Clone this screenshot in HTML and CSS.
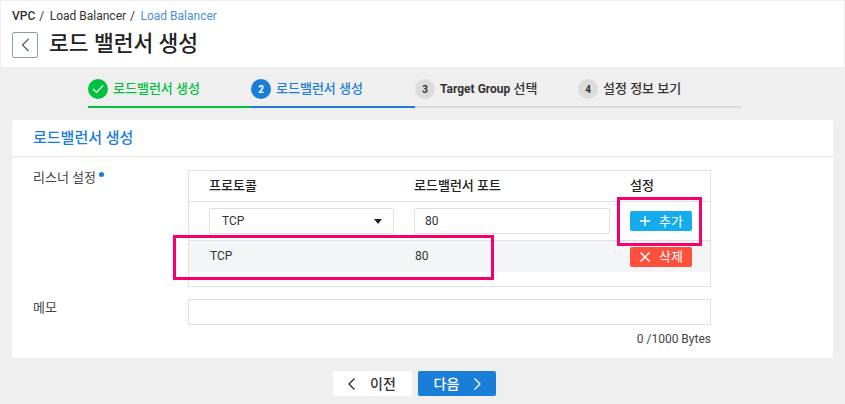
FILE: index.html
```html
<!DOCTYPE html>
<html lang="ko">
<head>
    <meta charset="UTF-8">
    <title>로드 밸런서 생성</title>
    <link rel="stylesheet" href="styles.css">
</head>
<body>
    <header class="page-head">
        <div class="crumbs">
            <strong>VPC</strong><span class="sep">/</span><span>Load Balancer</span><span class="sep">/</span><span class="crumb-now">Load Balancer</span>
        </div>
        <div class="title-row">
            <button class="back-btn" type="button">
                <svg width="9" height="14" viewBox="0 0 9 14"><path d="M7.5 1 1.5 7l6 6" fill="none" stroke="#4a5a70" stroke-width="1.2"/></svg>
            </button>
            <h1>로드 밸런서 생성</h1>
        </div>
    </header>

    <ol class="steps">
        <li class="step step-done">
            <span class="step-num">
                <svg width="12" height="10" viewBox="0 0 12 10"><path d="M1 5l3.5 3.5L11 1.5" fill="none" stroke="#fff" stroke-width="1.2"/></svg>
            </span>
            로드밸런서 생성
        </li>
        <li class="step step-now"><span class="step-num">2</span>로드밸런서 생성</li>
        <li class="step step-next"><span class="step-num">3</span><span><b>Target Group</b> 선택</span></li>
        <li class="step step-last"><span class="step-num">4</span>설정 정보 보기</li>
    </ol>

    <section class="card">
        <h2 class="card-title">로드밸런서 생성</h2>
        <div class="card-body">
            <div class="field field-listener">
                <label class="field-label">리스너 설정<i class="req"></i></label>
                <div class="listener">
                    <div class="row row-head">
                        <span class="col-proto">프로토콜</span>
                        <span class="col-port">로드밸런서 포트</span>
                        <span class="col-set">설정</span>
                    </div>
                    <div class="row row-input">
                        <div class="col-proto box select">TCP<i class="caret"></i></div>
                        <div class="col-port box box-port">80</div>
                        <div class="col-set">
                            <button class="btn-sm btn-add" type="button">
                                <svg width="12" height="12" viewBox="0 0 12 12"><path d="M6 1v10M1 6h10" stroke="#fff" stroke-width="1.5"/></svg>
                                <span class="btn-txt">추가</span>
                            </button>
                        </div>
                    </div>
                    <div class="row row-item">
                        <span class="col-proto item-txt">TCP</span>
                        <span class="col-port item-txt">80</span>
                        <div class="col-set">
                            <button class="btn-sm btn-del" type="button">
                                <svg width="12" height="12" viewBox="0 0 12 12"><path d="M1.5 1.5l9 9M10.5 1.5l-9 9" stroke="#fff" stroke-width="1.5"/></svg>
                                <span class="btn-txt">삭제</span>
                            </button>
                        </div>
                    </div>
                </div>
            </div>
            <div class="field field-memo">
                <label class="field-label">메모</label>
                <div class="memo-wrap">
                    <div class="memo"></div>
                    <div class="memo-count">0 /1000 Bytes</div>
                </div>
            </div>
        </div>
    </section>

    <div class="actions">
        <button class="btn-prev" type="button">
            <svg width="9" height="14" viewBox="0 0 9 14"><path d="M7.5 1.5 2 7l5.5 5.5" fill="none" stroke="#333" stroke-width="1.4"/></svg>
            <span class="btn-txt">이전</span>
        </button>
        <button class="btn-next" type="button">
            <span class="btn-txt">다음</span>
            <svg width="9" height="14" viewBox="0 0 9 14"><path d="M1.5 1.5 7 7l-5.5 5.5" fill="none" stroke="#fff" stroke-width="1.4"/></svg>
        </button>
    </div>

    <div class="mark mark-row"></div>
    <div class="mark mark-add"></div>
</body>
</html>
```

FILE: styles.css
```css
* {
    box-sizing: border-box;
}
html, body {
    height: 100%;
}
body {
    margin: 0;
    position: relative;
    overflow: hidden;
    background-color: #efefef;
    color: #333;
    font-family: Roboto, "Noto Sans CJK KR", sans-serif;
    font-size: 12px;
}
button {
    font-family: inherit;
    border: 0;
    padding: 0;
}

.page-head {
    height: 66px;
    margin: 1px 1px 0;
    padding: 7px 11px 0;
    background: white;
}
.crumbs {
    display: flex;
    height: 16px;
    line-height: 16px;
    color: #333;
}
.crumbs strong {
    font-weight: 500;
}
.crumbs .sep {
    margin: 0 5.5px 0 4px;
}
.crumb-now {
    color: #4a90d9;
}
.title-row {
    display: flex;
    align-items: center;
    gap: 11px;
    margin-top: 8px;
}
.back-btn {
    display: flex;
    align-items: center;
    justify-content: center;
    width: 26px;
    height: 26px;
    background: white;
    border: 1px solid #8a9bb3;
    border-radius: 2px;
}
h1 {
    margin: 0 0 2px;
    color: #222;
    font-size: 21.5px;
    font-weight: 500;
    line-height: 24px;
}

.steps {
    display: flex;
    height: 41px;
    margin: 12px 0 0 88px;
    padding: 0;
    list-style: none;
}
.step {
    display: flex;
    align-items: flex-start;
    gap: 5px;
    width: 163px;
    height: 29px;
    border-bottom: 2px solid #d9d9d9;
    color: #333;
    font-size: 13px;
    font-weight: 500;
    line-height: 19px;
}
.step-num {
    display: flex;
    align-items: center;
    justify-content: center;
    width: 20px;
    height: 20px;
    border-radius: 50%;
    background: #dcdcdc;
    font-size: 10px;
    font-weight: 700;
}
.step-done {
    border-color: #00c13f;
    color: #00c13f;
}
.step-done .step-num {
    background: #00c13f;
}
.step-now {
    width: 164px;
    border-color: #1a7dd7;
    color: #1a7dd7;
}
.step-now .step-num {
    background: #1a7dd7;
    color: white;
}
.step b {
    font-size: 12px;
    font-weight: 700;
}

.card {
    margin: 0 12px;
    height: 238px;
    background: white;
    border-radius: 3px;
}
.card-title {
    height: 37px;
    margin: 0;
    padding-left: 21px;
    border-bottom: 1px solid #e6e6e6;
    color: #1a7dd7;
    font-size: 15px;
    font-weight: 500;
    line-height: 36px;
}
.card-body {
    padding: 13px 122px 0 21px;
}
.field {
    display: flex;
}
.field-label {
    flex: none;
    width: 155px;
    font-size: 13px;
    line-height: 16px;
    color: #444;
}
.req {
    display: inline-block;
    vertical-align: 5px;
    width: 5px;
    height: 5px;
    margin-left: 3px;
    border-radius: 50%;
    background: #1a7dd7;
}

.listener {
    flex: 1;
    min-width: 0;
    height: 117px;
    border: 1px solid #e0e0e0;
}
.row {
    display: flex;
    align-items: center;
    padding-left: 20px;
}
.col-proto {
    flex: none;
    width: 185px;
    margin-right: 20px;
}
.col-port {
    flex: none;
    width: 196px;
    margin-right: 20px;
}
.row-head {
    height: 31px;
    padding-bottom: 4px;
    border-bottom: 1px solid #e0e0e0;
    color: #222;
    font-size: 13px;
    font-weight: 500;
}
.row-input {
    height: 39px;
    border-bottom: 1px solid #e0e0e0;
}
.box {
    height: 26px;
    padding-left: 12px;
    border: 1px solid #e0e0e0;
    border-radius: 2px;
    line-height: 24px;
}
.box-port {
    padding-left: 10px;
}
.select {
    position: relative;
}
.caret {
    position: absolute;
    top: 10px;
    right: 11px;
    border-style: solid;
    border-width: 5px 4.5px 0;
    border-color: #222 transparent transparent;
}
.row-item {
    height: 31px;
    background: #f4f5f7;
}
.item-txt {
    padding: 0 0 2px 1px;
}
.btn-sm {
    display: flex;
    align-items: center;
    gap: 8px;
    width: 62px;
    height: 20px;
    padding-left: 9px;
    border-radius: 2px;
    color: white;
    font-size: 13px;
}
.btn-txt {
    margin-bottom: 2px;
}
.btn-add {
    background: #14acec;
}
.btn-del {
    background: #ff4f3d;
}

.field-memo {
    margin-top: 12px;
}
.field-memo .field-label {
    padding-top: 1px;
}
.memo-wrap {
    flex: 1;
}
.memo {
    height: 26px;
    border: 1px solid #e0e0e0;
}
.memo-count {
    margin-top: 6px;
    text-align: right;
    line-height: 16px;
    color: #444;
}

.actions {
    display: flex;
    justify-content: center;
    gap: 6px;
    margin-top: 13px;
    padding-right: 16px;
}
.actions button {
    display: flex;
    align-items: center;
    justify-content: center;
    width: 78px;
    height: 25px;
    border-radius: 2px;
    font-size: 14px;
    font-weight: 500;
    gap: 14px;
}
.actions .btn-prev {
    width: 79px;
    padding-right: 2px;
    background: white;
    color: #333;
}
.actions .btn-next {
    padding-left: 2px;
    background: #1a7dd7;
    color: white;
}

/* 스크린샷에 표시된 강조 박스 */
.mark {
    position: absolute;
    border: 3px solid #f5006e;
}
.mark-row {
    left: 173px;
    top: 235px;
    width: 321px;
    height: 45px;
}
.mark-add {
    left: 617px;
    top: 197px;
    width: 85px;
    height: 49px;
}
```
